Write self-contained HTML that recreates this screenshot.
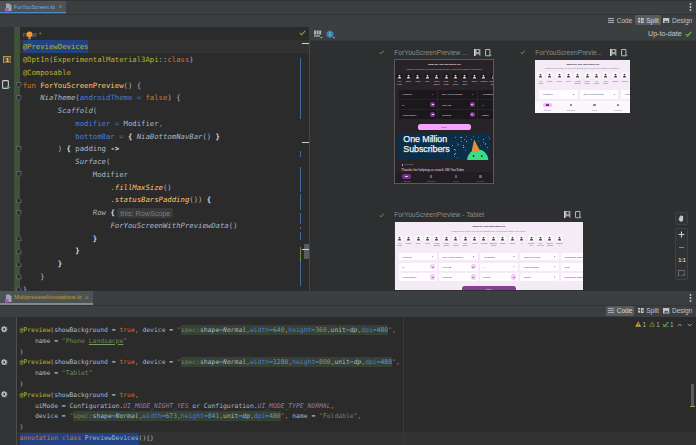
<!DOCTYPE html>
<html><head><meta charset="utf-8"><title>Compose Preview</title>
<style>
*{box-sizing:border-box;margin:0;padding:0}
html,body{width:696px;height:445px;overflow:hidden;background:#3c3f41}
body{position:relative;font-family:"Liberation Sans",sans-serif;color:#bbbbbb}
.abs{position:absolute}
.ui{font-family:"Liberation Sans",sans-serif;font-size:6.5px;line-height:9px;color:#c4c4c4;white-space:pre}
.code{position:absolute;font-family:"DejaVu Sans Mono","Liberation Mono",monospace;color:#a9b7c6}
.code div{white-space:pre}
#c1 div{height:12.75px;line-height:12.75px}
#c1{left:22.7px;top:28.6px;font-size:7.29px}
#c2{left:19.6px;top:324.9px;font-size:6.38px}
#c2 div{height:10.82px;line-height:10.82px}
.k{color:#cc7832}.a{color:#bbb529}.f{color:#ffc66d}.s{color:#6a8759}.n{color:#467cda}.i{font-style:italic}
.p{color:#9876aa;font-style:italic}.num{color:#6897bb}.w{color:#d5dde6;font-weight:bold}
.sel{background:#214283;display:inline-block;vertical-align:top}
#c1 .sel{height:12.75px}
#c2 .sel{height:12.8px}
.inj{background:#364135;padding:1px 0}
.hint{font-family:"Liberation Sans",sans-serif;font-size:7.2px;color:#7e7e7e;background:#3a3a3a;border-radius:2px;padding:0.5px 3px;margin-left:-1.8px}
.lbl{position:absolute;font-family:"Liberation Sans",sans-serif;font-size:6.68px;line-height:9px;color:#8c8c8c;white-space:pre}
.t{position:absolute;white-space:pre;font-family:"Liberation Sans",sans-serif;line-height:1}
</style></head><body>

<!-- top tab row -->
<div class="abs" style="left:0px;top:0px;width:696px;height:1px;background:#323232;"></div>
<div class="abs" style="left:0px;top:1px;width:66px;height:12.5px;background:#4e5254;"></div>
<div class="abs" style="left:0px;top:11.6px;width:66px;height:1.9px;background:#4a88c7;"></div>
<div class="abs" style="left:0px;top:13.5px;width:696px;height:0.8px;background:#323232;"></div>
<div class="abs ui" style="left:13.8px;top:2.6px;font-size:5.53px;color:#7aa8e2">ForYouScreen.kt</div>
<div class="abs ui" style="left:58.6px;top:2.4px;font-size:6.5px;color:#8a8d8f">×</div>
<svg class="abs" style="left:5px;top:2.5px" width="7" height="9" viewBox="0 0 7 9"><path d="M1 0.5h3.5L6.5 2.5V8H1z" fill="#9aa7b0"/><rect x="0" y="5" width="3.5" height="3.5" fill="#b34fd0"/></svg>
<svg class="abs" style="left:688.5px;top:3px" width="3" height="8" viewBox="0 0 3 8"><circle cx="1.5" cy="1" r="0.9" fill="#c8c8c8"/><circle cx="1.5" cy="4" r="0.9" fill="#c8c8c8"/><circle cx="1.5" cy="7" r="0.9" fill="#c8c8c8"/></svg>
<!-- top toolbar -->
<div class="abs" style="left:634.8px;top:14.9px;width:25.9px;height:10.4px;background:#585b5d;border-radius:1.5px"></div>
<div class="abs ui" style="left:616.8px;top:15.8px;">Code</div>
<div class="abs ui" style="left:646.2px;top:15.8px;color:#d8d8d8">Split</div>
<div class="abs ui" style="left:672px;top:15.8px">Design</div>
<svg class="abs" style="left:608.3px;top:17.6px" width="6.2" height="5.2" viewBox="0 0 6.2 5.2"><g fill="#a4a8ab"><rect x="0" y="0" width="6.2" height="1.1"/><rect x="0" y="2" width="6.2" height="1.1"/><rect x="0" y="4" width="6.2" height="1.1"/></g></svg>
<svg class="abs" style="left:638px;top:17.5px" width="5.6" height="5.4" viewBox="0 0 5.6 5.4"><g fill="#c4c8cc"><rect x="0" y="0" width="2.2" height="1"/><rect x="0" y="1.5" width="2.2" height="1"/><rect x="0" y="3" width="2.2" height="1"/><rect x="0" y="4.4" width="2.2" height="1"/><rect x="3" y="0" width="2.6" height="5.4"/></g><rect x="3.8" y="1.8" width="1" height="1.8" fill="#5a5d5f"/></svg>
<svg class="abs" style="left:663.4px;top:17.5px" width="6.3" height="5.5" viewBox="0 0 6.3 5.5"><rect x="0" y="0" width="6.3" height="5.5" fill="#c0c4c8"/><path d="M0.9 4.5L2.5 2.4l1 1.1L4.5 2.7 5.5 4.5z" fill="#3c3f41"/></svg>
<!-- top editor -->
<div class="abs" style="left:0px;top:27px;width:308.8px;height:263.5px;background:#2b2b2b;"></div>
<div class="abs" style="left:0px;top:40.2px;width:308.8px;height:12.6px;background:#323232;"></div>
<div class="abs" style="left:22.8px;top:40.2px;width:65.7px;height:12.5px;background:#214283;"></div>
<div class="abs" style="left:0px;top:27px;width:14.2px;height:263.5px;background:#313335;"></div>
<div class="abs" style="left:14.2px;top:27px;width:5.8px;height:263.5px;background:#3e5139;"></div>
<div id="c1" class="code">
<div><span style="color:#787878;font-family:'Liberation Sans',sans-serif;font-size:7.6px">new *</span></div>
<div><span class="a">@PreviewDevices</span></div>
<div><span class="a">@OptIn</span>(<span class="a">ExperimentalMaterial3Api</span>::<span class="k">class</span>)</div>
<div><span class="a">@Composable</span></div>
<div><span class="k">fun </span><span class="f">ForYouScreenPreview</span>() {</div>
<div>    <span class="i">NiaTheme</span>(<span class="n">androidTheme = </span><span class="k">false</span>) {</div>
<div>        <span class="i">Scaffold</span>(</div>
<div>            <span class="n">modifier = </span>Modifier<span class="k">,</span></div>
<div>            <span class="n">bottomBar = </span><span class="w">{</span> <span class="i">NiaBottomNavBar</span>() <span class="w">}</span></div>
<div>        ) <span class="w">{</span> padding <span class="w">-&gt;</span></div>
<div>            <span class="i">Surface</span>(</div>
<div>                Modifier</div>
<div>                    .<span class="f i">fillMaxSize</span>()</div>
<div>                    .<span class="f i">statusBarsPadding</span>()) <span class="w">{</span></div>
<div>                <span class="i">Row</span> <span class="w">{</span> <span class="hint">this: RowScope</span></div>
<div>                    <span class="i">ForYouScreenWithPreviewData</span>()</div>
<div>                <span class="w">}</span></div>
<div>            <span class="w">}</span></div>
<div>        <span class="w">}</span></div>
<div>    }</div>
<div>}</div>
</div>
<svg class="abs" style="left:16.4px;top:82.20px" width="5.6" height="6.3" viewBox="0 0 5.6 6.3"><path d="M0.5 0.5H5.1V3.6L2.8 5.8 0.5 3.6z" fill="#2e3032" stroke="#63676a" stroke-width="0.9"/></svg>
<svg class="abs" style="left:16.4px;top:94.95px" width="5.6" height="6.3" viewBox="0 0 5.6 6.3"><path d="M0.5 0.5H5.1V3.6L2.8 5.8 0.5 3.6z" fill="#2e3032" stroke="#63676a" stroke-width="0.9"/></svg>
<svg class="abs" style="left:16.4px;top:145.95px" width="5.6" height="6.3" viewBox="0 0 5.6 6.3"><path d="M0.5 0.5H5.1V3.6L2.8 5.8 0.5 3.6z" fill="#2e3032" stroke="#63676a" stroke-width="0.9"/></svg>
<svg class="abs" style="left:16.4px;top:171.45px" width="5.6" height="6.3" viewBox="0 0 5.6 6.3"><path d="M0.5 0.5H5.1V3.6L2.8 5.8 0.5 3.6z" fill="#2e3032" stroke="#63676a" stroke-width="0.9"/></svg>
<svg class="abs" style="left:16.4px;top:196.95px" width="5.6" height="6.3" viewBox="0 0 5.6 6.3"><path d="M0.5 5.8H5.1V2.7L2.8 0.5 0.5 2.7z" fill="#2e3032" stroke="#63676a" stroke-width="0.9"/></svg>
<svg class="abs" style="left:16.4px;top:209.70px" width="5.6" height="6.3" viewBox="0 0 5.6 6.3"><path d="M0.5 0.5H5.1V3.6L2.8 5.8 0.5 3.6z" fill="#2e3032" stroke="#63676a" stroke-width="0.9"/></svg>
<svg class="abs" style="left:16.4px;top:235.20px" width="5.6" height="6.3" viewBox="0 0 5.6 6.3"><path d="M0.5 5.8H5.1V2.7L2.8 0.5 0.5 2.7z" fill="#2e3032" stroke="#63676a" stroke-width="0.9"/></svg>
<svg class="abs" style="left:16.4px;top:247.95px" width="5.6" height="6.3" viewBox="0 0 5.6 6.3"><path d="M0.5 5.8H5.1V2.7L2.8 0.5 0.5 2.7z" fill="#2e3032" stroke="#63676a" stroke-width="0.9"/></svg>
<svg class="abs" style="left:16.4px;top:260.70px" width="5.6" height="6.3" viewBox="0 0 5.6 6.3"><path d="M0.5 5.8H5.1V2.7L2.8 0.5 0.5 2.7z" fill="#2e3032" stroke="#63676a" stroke-width="0.9"/></svg>
<svg class="abs" style="left:16.4px;top:273.45px" width="5.6" height="6.3" viewBox="0 0 5.6 6.3"><path d="M0.5 5.8H5.1V2.7L2.8 0.5 0.5 2.7z" fill="#2e3032" stroke="#63676a" stroke-width="0.9"/></svg>
<svg class="abs" style="left:16.4px;top:286.20px" width="5.6" height="6.3" viewBox="0 0 5.6 6.3"><path d="M0.5 5.8H5.1V2.7L2.8 0.5 0.5 2.7z" fill="#2e3032" stroke="#63676a" stroke-width="0.9"/></svg>
<svg class="abs" style="left:2.8px;top:55.5px" width="8.5" height="7.5" viewBox="0 0 8.5 7.5"><rect x="0.4" y="0.4" width="7.7" height="6.7" fill="#5e5339" stroke="#c9a94a" stroke-width="0.8"/><text x="4.3" y="6" font-size="6" font-weight="bold" text-anchor="middle" fill="#e8dcae" font-family="Liberation Sans, sans-serif">1</text></svg>
<svg class="abs" style="left:2px;top:79.5px" width="9" height="9.5" viewBox="0 0 9 9.5"><rect x="0.6" y="0.6" width="5.8" height="7.8" rx="0.8" fill="#3a3d3f" stroke="#c3c7ca" stroke-width="1.1"/><rect x="1.8" y="2" width="3.4" height="4" fill="#2f3133"/><path d="M5.2 5.6L8.6 7.5 5.2 9.4z" fill="#57b560"/></svg>
<svg class="abs" style="left:26.2px;top:30.8px" width="7" height="9" viewBox="0 0 7 9"><circle cx="3.5" cy="3.3" r="2.9" fill="#f0993a"/><rect x="2.2" y="6.4" width="2.6" height="1.8" fill="#9a9a9a"/></svg>
<svg class="abs" style="left:299px;top:30.4px" width="7" height="6" viewBox="0 0 7 6"><path d="M0.8 2.8L2.6 4.8 6.2 0.8" fill="none" stroke="#86a83c" stroke-width="1.1"/></svg>
<div class="abs" style="left:302px;top:42.6px;width:6.8px;height:1.3px;background:#cfcfcf;"></div>
<div class="abs" style="left:302px;top:141.7px;width:6.8px;height:1.3px;background:#cfcfcf;"></div>
<div class="abs" style="left:300.2px;top:58px;width:0.9px;height:61px;background:#41699c;"></div>
<div class="abs" style="left:300.2px;top:150.5px;width:0.9px;height:6px;background:#41699c;"></div>
<div class="abs" style="left:300.2px;top:167px;width:0.9px;height:24.5px;background:#41699c;"></div>
<div class="abs" style="left:300.2px;top:194px;width:0.9px;height:16px;background:#41699c;"></div>
<div class="abs" style="left:300.2px;top:213px;width:0.9px;height:11px;background:#41699c;"></div>
<div class="abs" style="left:300.2px;top:227px;width:0.9px;height:2px;background:#41699c;"></div>
<div class="abs" style="left:300.2px;top:232px;width:0.9px;height:8px;background:#41699c;"></div>
<div class="abs" style="left:300.2px;top:262px;width:0.9px;height:24px;background:#41699c;"></div>
<div class="abs" style="left:299.6px;top:247px;width:1.4px;height:15px;background:#6f8a4c;"></div>
<div class="abs" style="left:304px;top:244px;width:4.5px;height:15px;background:#5a5d5f;border-radius:1px"></div>
<div class="abs" style="left:302px;top:248.6px;width:6.8px;height:1.1px;background:#d8d8b0;"></div>
<!-- preview panel -->
<div class="abs" style="left:308.8px;top:27px;width:1.3px;height:263.5px;background:#434648;"></div>
<div class="abs" style="left:308.8px;top:27px;width:387.2px;height:13.6px;background:#3c3f41;"></div>
<div class="abs" style="left:310.1px;top:40.8px;width:385.9px;height:250px;background:#2d2f30;"></div>
<div class="abs" style="left:310.1px;top:40.4px;width:385.9px;height:0.8px;background:#343637;"></div>
<div class="abs ui" style="left:648px;top:29.6px;font-size:7.13px;color:#c8c8c8">Up-to-date</div>
<svg class="abs" style="left:684.5px;top:30.5px" width="7" height="6" viewBox="0 0 7 6"><path d="M0.8 3.2L2.6 5 6.2 0.8" fill="none" stroke="#62b543" stroke-width="1.2"/></svg>
<svg class="abs" style="left:313.5px;top:30px" width="9" height="9" viewBox="0 0 9 9"><g fill="#aeb2b5"><rect x="0" y="0.5" width="2" height="4"/><rect x="2.6" y="0.5" width="2" height="4"/><rect x="5.2" y="0.5" width="2" height="4"/><rect x="0" y="5.4" width="6" height="1.2"/></g><path d="M6 7h2.6L7.3 8.6z" fill="#aeb2b5"/></svg>
<svg class="abs" style="left:325.5px;top:29.5px" width="10" height="10" viewBox="0 0 10 10"><path d="M4 0.3L7.4 2.2V6.2L4 8.1 0.6 6.2V2.2z" fill="#3d7ec2"/><circle cx="4" cy="2.6" r="0.7" fill="#6fd06a"/><circle cx="4" cy="4.2" r="0.7" fill="#6fd06a"/><circle cx="4" cy="5.8" r="0.7" fill="#6fd06a"/><path d="M6.6 7h2.6L7.9 8.6z" fill="#aeb2b5"/></svg>
<!-- preview 1 -->
<svg class="abs" style="left:379.3px;top:50.4px" width="5.6" height="4.6" viewBox="0 0 7 6"><path d="M0.8 3.2L2.6 5 6.2 0.8" fill="none" stroke="#55a848" stroke-width="1.3"/></svg>
<div class="lbl" style="left:394.3px;top:48px">ForYouScreenPreview ...</div>
<svg class="abs" style="left:474px;top:48.8px" width="6.9" height="7.3" viewBox="0 0 7.5 8"><rect x="0" y="0" width="7" height="7.6" fill="#9ea2a5"/><circle cx="3.9" cy="2.3" r="1.3" fill="#2d2f30"/><path d="M1.6 7.6C1.6 5 6.2 5 6.2 7.6z" fill="#2d2f30"/><rect x="0" y="0" width="1.4" height="7.6" fill="#d8d8d8"/></svg>
<svg class="abs" style="left:484.8px;top:48.9px" width="7" height="7.9" viewBox="0 0 8 9"><rect x="0.6" y="0.6" width="5" height="7" rx="0.7" fill="#2d2f30" stroke="#b4b8bb" stroke-width="1.15"/><path d="M4.6 5.2L7.8 7 4.6 8.8z" fill="#57b560"/></svg>
<div class="abs" style="left:394px;top:59.3px;width:100px;height:125px;background:#272327;border:0.7px solid #5c5a5c;overflow:hidden">
<div class="t" style="left:-10.699999999999989px;width:120px;text-align:center;top:3.700000000000003px;font-size:2.5px;color:#f3e6f5;font-weight:bold">What are you interested in?</div>
<div class="t" style="left:-10.699999999999989px;width:120px;text-align:center;top:7.5px;font-size:2.1px;color:#d9a8e6;">Updates from topics you follow will appear here. Follow some things to get started.</div>
<svg class="abs" style="left:0.60px;top:12.50px" width="7" height="7" viewBox="-3.5 -3.5 7 7"><circle r="3.1" fill="#181518"/><circle cx="0" cy="-0.9" r="0.95" fill="#ddd4e0"/><path d="M-1.7 1.9C-1.7 -0.2 1.7 -0.2 1.7 1.9z" fill="#ddd4e0"/></svg>
<div class="t" style="left:-55.89999999999998px;width:120px;text-align:center;top:20.0px;font-size:2.0px;color:#e8c8f0;">Ana</div>
<div class="t" style="left:-55.89999999999998px;width:120px;text-align:center;top:22.299999999999997px;font-size:2.0px;color:#e8c8f0;">Horak</div>
<svg class="abs" style="left:10.00px;top:12.50px" width="7" height="7" viewBox="-3.5 -3.5 7 7"><circle r="3.1" fill="#181518"/><circle cx="0" cy="-0.9" r="0.95" fill="#ddd4e0"/><path d="M-1.7 1.9C-1.7 -0.2 1.7 -0.2 1.7 1.9z" fill="#ddd4e0"/></svg>
<div class="t" style="left:-46.5px;width:120px;text-align:center;top:20.0px;font-size:2.0px;color:#e8c8f0;">Blank</div>
<svg class="abs" style="left:19.40px;top:12.50px" width="7" height="7" viewBox="-3.5 -3.5 7 7"><circle r="3.1" fill="#181518"/><circle cx="0" cy="-0.9" r="0.95" fill="#ddd4e0"/><path d="M-1.7 1.9C-1.7 -0.2 1.7 -0.2 1.7 1.9z" fill="#ddd4e0"/></svg>
<div class="t" style="left:-37.099999999999966px;width:120px;text-align:center;top:20.0px;font-size:2.0px;color:#e8c8f0;">Milan</div>
<svg class="abs" style="left:28.80px;top:12.50px" width="7" height="7" viewBox="-3.5 -3.5 7 7"><circle r="3.1" fill="#181518"/><circle cx="0" cy="-0.9" r="0.95" fill="#ddd4e0"/><path d="M-1.7 1.9C-1.7 -0.2 1.7 -0.2 1.7 1.9z" fill="#ddd4e0"/></svg>
<div class="t" style="left:-27.69999999999999px;width:120px;text-align:center;top:20.0px;font-size:2.0px;color:#e8c8f0;">Rizvi</div>
<svg class="abs" style="left:38.20px;top:12.50px" width="7" height="7" viewBox="-3.5 -3.5 7 7"><circle r="3.1" fill="#181518"/><circle cx="0" cy="-0.9" r="0.95" fill="#ddd4e0"/><path d="M-1.7 1.9C-1.7 -0.2 1.7 -0.2 1.7 1.9z" fill="#ddd4e0"/></svg>
<div class="t" style="left:-18.299999999999955px;width:120px;text-align:center;top:20.0px;font-size:2.0px;color:#e8c8f0;">Singh</div>
<div class="t" style="left:-18.299999999999955px;width:120px;text-align:center;top:22.299999999999997px;font-size:2.0px;color:#e8c8f0;">Bowen</div>
<svg class="abs" style="left:47.60px;top:12.50px" width="7" height="7" viewBox="-3.5 -3.5 7 7"><circle r="3.1" fill="#181518"/><circle cx="0" cy="-0.9" r="0.95" fill="#ddd4e0"/><path d="M-1.7 1.9C-1.7 -0.2 1.7 -0.2 1.7 1.9z" fill="#ddd4e0"/></svg>
<div class="t" style="left:-8.899999999999977px;width:120px;text-align:center;top:20.0px;font-size:2.0px;color:#e8c8f0;">Marty</div>
<div class="t" style="left:-8.899999999999977px;width:120px;text-align:center;top:22.299999999999997px;font-size:2.0px;color:#e8c8f0;">Smith</div>
<svg class="abs" style="left:57.00px;top:12.50px" width="7" height="7" viewBox="-3.5 -3.5 7 7"><circle r="3.1" fill="#181518"/><circle cx="0" cy="-0.9" r="0.95" fill="#ddd4e0"/><path d="M-1.7 1.9C-1.7 -0.2 1.7 -0.2 1.7 1.9z" fill="#ddd4e0"/></svg>
<div class="t" style="left:0.5000000000000568px;width:120px;text-align:center;top:20.0px;font-size:2.0px;color:#e8c8f0;">Liu</div>
<div class="t" style="left:0.5000000000000568px;width:120px;text-align:center;top:22.299999999999997px;font-size:2.0px;color:#e8c8f0;">Ivanov</div>
<svg class="abs" style="left:66.40px;top:12.50px" width="7" height="7" viewBox="-3.5 -3.5 7 7"><circle r="3.1" fill="#181518"/><circle cx="0" cy="-0.9" r="0.95" fill="#ddd4e0"/><path d="M-1.7 1.9C-1.7 -0.2 1.7 -0.2 1.7 1.9z" fill="#ddd4e0"/></svg>
<div class="t" style="left:9.900000000000034px;width:120px;text-align:center;top:20.0px;font-size:2.0px;color:#e8c8f0;">Jeffy</div>
<div class="t" style="left:9.900000000000034px;width:120px;text-align:center;top:22.299999999999997px;font-size:2.0px;color:#e8c8f0;">Brink</div>
<svg class="abs" style="left:75.80px;top:12.50px" width="7" height="7" viewBox="-3.5 -3.5 7 7"><circle r="3.1" fill="#181518"/><circle cx="0" cy="-0.9" r="0.95" fill="#ddd4e0"/><path d="M-1.7 1.9C-1.7 -0.2 1.7 -0.2 1.7 1.9z" fill="#ddd4e0"/></svg>
<div class="t" style="left:19.30000000000001px;width:120px;text-align:center;top:20.0px;font-size:2.0px;color:#e8c8f0;">Sofica</div>
<svg class="abs" style="left:85.20px;top:12.50px" width="7" height="7" viewBox="-3.5 -3.5 7 7"><circle r="3.1" fill="#181518"/><circle cx="0" cy="-0.9" r="0.95" fill="#ddd4e0"/><path d="M-1.7 1.9C-1.7 -0.2 1.7 -0.2 1.7 1.9z" fill="#ddd4e0"/></svg>
<div class="t" style="left:28.700000000000045px;width:120px;text-align:center;top:20.0px;font-size:2.0px;color:#e8c8f0;">Ludmila</div>
<svg class="abs" style="left:94.60px;top:12.50px" width="7" height="7" viewBox="-3.5 -3.5 7 7"><circle r="3.1" fill="#181518"/><circle cx="0" cy="-0.9" r="0.95" fill="#ddd4e0"/><path d="M-1.7 1.9C-1.7 -0.2 1.7 -0.2 1.7 1.9z" fill="#ddd4e0"/></svg>
<div class="t" style="left:38.10000000000002px;width:120px;text-align:center;top:20.0px;font-size:2.0px;color:#e8c8f0;">Stephen</div>
<div class="t" style="left:38.10000000000002px;width:120px;text-align:center;top:22.299999999999997px;font-size:2.0px;color:#e8c8f0;">Jones</div>
<div class="abs" style="left:3.5px;top:30.0px;width:38.6px;height:8.7px;background:#1b181b;border-radius:1px"></div>
<div class="t" style="left:7.0px;top:33.2px;font-size:2.2px;color:#efe4f2;">Headlines</div>
<div class="abs" style="left:37.1px;top:33.8px;width:1.4px;height:1.1px;background:#a95bbb;clip-path:polygon(0 0,100% 0,50% 100%)"></div>
<div class="abs" style="left:43.4px;top:30.0px;width:38.6px;height:8.7px;background:#1b181b;border-radius:1px"></div>
<div class="t" style="left:46.89999999999998px;top:33.2px;font-size:2.2px;color:#efe4f2;">New APIs & Libraries</div>
<div class="abs" style="left:77.0px;top:33.8px;width:1.4px;height:1.1px;background:#a95bbb;clip-path:polygon(0 0,100% 0,50% 100%)"></div>
<div class="abs" style="left:83.3px;top:30.0px;width:38.6px;height:8.7px;background:#1b181b;border-radius:1px"></div>
<div class="t" style="left:86.80000000000001px;top:33.2px;font-size:2.2px;color:#efe4f2;">Accessibility</div>
<div class="abs" style="left:116.9px;top:33.8px;width:1.4px;height:1.1px;background:#a95bbb;clip-path:polygon(0 0,100% 0,50% 100%)"></div>
<div class="abs" style="left:3.5px;top:40.05px;width:38.6px;height:8.7px;background:#1b181b;border-radius:1px"></div>
<div class="t" style="left:7.0px;top:43.25px;font-size:2.2px;color:#efe4f2;">UI</div>
<div class="abs" style="left:34.8px;top:41.65px;width:5.5px;height:5.5px;background:#86359a;border-radius:50%"></div>
<div class="abs" style="left:36.5px;top:44.15px;width:2.1px;height:0.6px;background:#e9c8f0;"></div>
<div class="abs" style="left:43.4px;top:40.05px;width:38.6px;height:8.7px;background:#1b181b;border-radius:1px"></div>
<div class="t" style="left:46.89999999999998px;top:43.25px;font-size:2.2px;color:#efe4f2;">Wear OS</div>
<div class="abs" style="left:74.7px;top:41.65px;width:5.5px;height:5.5px;background:#86359a;border-radius:50%"></div>
<div class="abs" style="left:76.4px;top:44.15px;width:2.1px;height:0.6px;background:#e9c8f0;"></div>
<div class="abs" style="left:83.3px;top:40.05px;width:38.6px;height:8.7px;background:#1b181b;border-radius:1px"></div>
<div class="t" style="left:86.80000000000001px;top:43.25px;font-size:2.2px;color:#efe4f2;">AI</div>
<div class="abs" style="left:114.6px;top:41.65px;width:5.5px;height:5.5px;background:#86359a;border-radius:50%"></div>
<div class="abs" style="left:116.3px;top:44.15px;width:2.1px;height:0.6px;background:#e9c8f0;"></div>
<div class="abs" style="left:3.5px;top:50.1px;width:38.6px;height:8.7px;background:#1b181b;border-radius:1px"></div>
<div class="t" style="left:7.0px;top:53.3px;font-size:2.2px;color:#efe4f2;">Android Studio</div>
<div class="abs" style="left:34.8px;top:51.7px;width:5.5px;height:5.5px;background:#86359a;border-radius:50%"></div>
<div class="abs" style="left:36.5px;top:54.2px;width:2.1px;height:0.6px;background:#e9c8f0;"></div>
<div class="abs" style="left:43.4px;top:50.1px;width:38.6px;height:8.7px;background:#1b181b;border-radius:1px"></div>
<div class="t" style="left:46.89999999999998px;top:53.3px;font-size:2.2px;color:#efe4f2;">Compose</div>
<div class="abs" style="left:74.7px;top:51.7px;width:5.5px;height:5.5px;background:#86359a;border-radius:50%"></div>
<div class="abs" style="left:76.4px;top:54.2px;width:2.1px;height:0.6px;background:#e9c8f0;"></div>
<div class="abs" style="left:83.3px;top:50.1px;width:38.6px;height:8.7px;background:#1b181b;border-radius:1px"></div>
<div class="t" style="left:86.80000000000001px;top:53.3px;font-size:2.2px;color:#efe4f2;">Testing</div>
<div class="abs" style="left:114.6px;top:51.7px;width:5.5px;height:5.5px;background:#86359a;border-radius:50%"></div>
<div class="abs" style="left:116.3px;top:54.2px;width:2.1px;height:0.6px;background:#e9c8f0;"></div>
<div class="abs" style="left:22.5px;top:64.2px;width:53.3px;height:5.2px;background:#f5a3ff;border-radius:2.6px"></div>
<div class="t" style="left:-10.699999999999989px;width:120px;text-align:center;top:65.8px;font-size:2.2px;color:#5a2a66;">Done</div>
<div class="abs" style="left:2.9px;top:73.9px;width:91.7px;height:26.2px;background:#0c2f47;border-radius:1px"></div>
<div class="abs" style="left:69.28px;top:78.35px;width:0.7px;height:0.7px;background:#6f80b8;"></div>
<div class="abs" style="left:59.09px;top:95.44px;width:0.7px;height:0.7px;background:#3f68b0;"></div>
<div class="abs" style="left:70.83px;top:75.98px;width:0.7px;height:0.7px;background:#9a4a5a;"></div>
<div class="abs" style="left:65.24px;top:76.69px;width:0.7px;height:0.7px;background:#4a90b8;"></div>
<div class="abs" style="left:59.88px;top:76.81px;width:0.7px;height:0.7px;background:#4a90b8;"></div>
<div class="abs" style="left:59.49px;top:88.92px;width:0.7px;height:0.7px;background:#aab0c8;"></div>
<div class="abs" style="left:59.59px;top:89.43px;width:0.7px;height:0.7px;background:#3f68b0;"></div>
<div class="abs" style="left:93.42px;top:75.69px;width:0.7px;height:0.7px;background:#35598f;"></div>
<div class="abs" style="left:62.23px;top:85.19px;width:0.7px;height:0.7px;background:#9a4a5a;"></div>
<div class="abs" style="left:61.66px;top:82.37px;width:0.7px;height:0.7px;background:#35598f;"></div>
<div class="abs" style="left:82.53px;top:77.13px;width:0.7px;height:0.7px;background:#9a4a5a;"></div>
<div class="abs" style="left:77.57px;top:76.1px;width:0.7px;height:0.7px;background:#3f68b0;"></div>
<div class="abs" style="left:70.68px;top:80.83px;width:0.7px;height:0.7px;background:#aab0c8;"></div>
<div class="abs" style="left:83.16px;top:80.72px;width:0.7px;height:0.7px;background:#9a4a5a;"></div>
<div class="abs" style="left:68.41px;top:87.13px;width:0.7px;height:0.7px;background:#c89a3e;"></div>
<div class="abs" style="left:93.57px;top:77.51px;width:0.7px;height:0.7px;background:#4a90b8;"></div>
<div class="abs" style="left:63.4px;top:83.22px;width:0.7px;height:0.7px;background:#4a90b8;"></div>
<div class="abs" style="left:60.17px;top:88.73px;width:0.7px;height:0.7px;background:#35598f;"></div>
<div class="abs" style="left:89.69px;top:82.5px;width:0.7px;height:0.7px;background:#6f80b8;"></div>
<div class="abs" style="left:70.26px;top:87.17px;width:0.7px;height:0.7px;background:#35598f;"></div>
<div class="abs" style="left:92.25px;top:86.59px;width:0.7px;height:0.7px;background:#6f80b8;"></div>
<div class="abs" style="left:59.7px;top:93.14px;width:0.7px;height:0.7px;background:#c89a3e;"></div>
<div class="abs" style="left:87.71px;top:81.76px;width:0.7px;height:0.7px;background:#4a90b8;"></div>
<div class="abs" style="left:90.12px;top:83.35px;width:0.7px;height:0.7px;background:#4a90b8;"></div>
<div class="abs" style="left:70.45px;top:90.08px;width:0.7px;height:0.7px;background:#4a90b8;"></div>
<div class="abs" style="left:59.48px;top:94.09px;width:0.7px;height:0.7px;background:#aab0c8;"></div>
<div class="abs" style="left:84.62px;top:84.65px;width:0.7px;height:0.7px;background:#35598f;"></div>
<div class="abs" style="left:75.67px;top:78.74px;width:0.7px;height:0.7px;background:#4a90b8;"></div>
<div class="abs" style="left:67.6px;top:85.09px;width:0.7px;height:0.7px;background:#c89a3e;"></div>
<div class="abs" style="left:65.84px;top:76.62px;width:0.7px;height:0.7px;background:#aab0c8;"></div>
<div class="abs" style="left:65.88px;top:80.45px;width:0.7px;height:0.7px;background:#4a90b8;"></div>
<div class="abs" style="left:88.05px;top:79.15px;width:0.7px;height:0.7px;background:#c89a3e;"></div>
<div class="abs" style="left:57.45px;top:85.18px;width:0.7px;height:0.7px;background:#c89a3e;"></div>
<div class="abs" style="left:61.94px;top:96.41px;width:0.7px;height:0.7px;background:#9a4a5a;"></div>
<svg class="abs" style="left:71.90px;top:79.00px" width="22" height="21.2" viewBox="0 0 22 21.2"><path d="M0 21.2A10.7 10.7 0 0 1 21.4 21.2z" fill="#3ddc84"/><path d="M7.1 0.5L4.6 12.4Q8.8 13.4 12.8 11.2z" fill="#e98b3c"/><circle cx="6.6" cy="17" r="0.9" fill="#0c2f47"/><circle cx="14.8" cy="17" r="0.9" fill="#0c2f47"/></svg>
<div class="t" style="left:8.300000000000011px;top:74.6px;font-size:8.9px;color:#f4f4f4;letter-spacing:-0.05px;-webkit-text-stroke:0.25px #f4f4f4">One Million</div>
<div class="t" style="left:8.300000000000011px;top:84.4px;font-size:8.9px;color:#f4f4f4;letter-spacing:-0.05px;-webkit-text-stroke:0.25px #f4f4f4">Subscribers</div>
<div class="abs" style="left:6.7px;top:103.6px;width:1.8px;height:1.8px;background:#cfc0d4;border-radius:50%"></div>
<div class="t" style="left:10.100000000000023px;top:103.69999999999999px;font-size:1.5px;color:#cdbcd2;">Jan 1, 2021</div>
<div class="t" style="left:6.300000000000011px;top:108.5px;font-size:3.45px;color:#ecd9f2;">Thanks for helping us reach 1M YouTube</div>
<div class="abs" style="left:-0.7px;top:112.2px;width:100px;height:12.5px;background:#211d21;"></div>
<div class="abs" style="left:7.3px;top:114.1px;width:9.2px;height:4.5px;background:#7b2f8d;border-radius:2.25px"></div>
<div class="abs" style="left:10.3px;top:115.6px;width:3.2px;height:1.4px;background:#f0d8f5;border-radius:0.5px"></div>
<div class="t" style="left:-48.099999999999966px;width:120px;text-align:center;top:120.19999999999999px;font-size:2.0px;color:#c9a6d2;">For you</div>
<div class="abs" style="left:34.7px;top:115.2px;width:2.8px;height:2.8px;background:#6e6470;border-radius:0.6px"></div>
<div class="t" style="left:-23.899999999999977px;width:120px;text-align:center;top:120.19999999999999px;font-size:2.0px;color:#8f8492;">Episodes</div>
<div class="abs" style="left:59.5px;top:115.2px;width:2.8px;height:2.8px;background:#6e6470;border-radius:0.6px"></div>
<div class="t" style="left:0.9000000000000341px;width:120px;text-align:center;top:120.19999999999999px;font-size:2.0px;color:#8f8492;">Saved</div>
<div class="abs" style="left:83.9px;top:115.2px;width:2.8px;height:2.8px;background:#6e6470;border-radius:0.6px"></div>
<div class="t" style="left:25.30000000000001px;width:120px;text-align:center;top:120.19999999999999px;font-size:2.0px;color:#8f8492;">Interests</div>
</div>
<!-- preview 2 -->
<svg class="abs" style="left:520.3px;top:50.4px" width="5.6" height="4.6" viewBox="0 0 7 6"><path d="M0.8 3.2L2.6 5 6.2 0.8" fill="none" stroke="#55a848" stroke-width="1.3"/></svg>
<div class="lbl" style="left:535.3px;top:48px">ForYouScreenPrevie...</div>
<svg class="abs" style="left:610px;top:48.8px" width="6.9" height="7.3" viewBox="0 0 7.5 8"><rect x="0" y="0" width="7" height="7.6" fill="#9ea2a5"/><circle cx="3.9" cy="2.3" r="1.3" fill="#2d2f30"/><path d="M1.6 7.6C1.6 5 6.2 5 6.2 7.6z" fill="#2d2f30"/><rect x="0" y="0" width="1.4" height="7.6" fill="#d8d8d8"/></svg>
<svg class="abs" style="left:620.8px;top:48.9px" width="7" height="7.9" viewBox="0 0 8 9"><rect x="0.6" y="0.6" width="5" height="7" rx="0.7" fill="#2d2f30" stroke="#b4b8bb" stroke-width="1.15"/><path d="M4.6 5.2L7.8 7 4.6 8.8z" fill="#57b560"/></svg>
<div class="abs" style="left:535px;top:59.5px;width:95.2px;height:53.8px;background:#f4ebf6;overflow:hidden">
<div class="t" style="left:-12.200000000000045px;width:120px;text-align:center;top:4.100000000000001px;font-size:2.5px;color:#2a222c;font-weight:bold">What are you interested in?</div>
<div class="t" style="left:-12.600000000000023px;width:120px;text-align:center;top:7.900000000000006px;font-size:2.05px;color:#7c727f;">Updates from topics you follow will appear here. Follow some things to get started.</div>
<svg class="abs" style="left:1.90px;top:12.80px" width="7" height="7" viewBox="-3.5 -3.5 7 7"><circle r="3.3" fill="#ffffff"/><circle cx="0" cy="-0.9" r="0.95" fill="#4a444c"/><path d="M-1.7 1.9C-1.7 -0.2 1.7 -0.2 1.7 1.9z" fill="#4a444c"/></svg>
<div class="t" style="left:-54.60000000000002px;width:120px;text-align:center;top:20.5px;font-size:2.0px;color:#5f5662;">Ana</div>
<div class="t" style="left:-54.60000000000002px;width:120px;text-align:center;top:22.799999999999997px;font-size:2.0px;color:#5f5662;">Horak</div>
<svg class="abs" style="left:11.25px;top:12.80px" width="7" height="7" viewBox="-3.5 -3.5 7 7"><circle r="3.3" fill="#ffffff"/><circle cx="0" cy="-0.9" r="0.95" fill="#4a444c"/><path d="M-1.7 1.9C-1.7 -0.2 1.7 -0.2 1.7 1.9z" fill="#4a444c"/></svg>
<div class="t" style="left:-45.25px;width:120px;text-align:center;top:20.5px;font-size:2.0px;color:#5f5662;">Blank</div>
<svg class="abs" style="left:20.60px;top:12.80px" width="7" height="7" viewBox="-3.5 -3.5 7 7"><circle r="3.3" fill="#ffffff"/><circle cx="0" cy="-0.9" r="0.95" fill="#4a444c"/><path d="M-1.7 1.9C-1.7 -0.2 1.7 -0.2 1.7 1.9z" fill="#4a444c"/></svg>
<div class="t" style="left:-35.89999999999998px;width:120px;text-align:center;top:20.5px;font-size:2.0px;color:#5f5662;">Milan</div>
<svg class="abs" style="left:29.95px;top:12.80px" width="7" height="7" viewBox="-3.5 -3.5 7 7"><circle r="3.3" fill="#ffffff"/><circle cx="0" cy="-0.9" r="0.95" fill="#4a444c"/><path d="M-1.7 1.9C-1.7 -0.2 1.7 -0.2 1.7 1.9z" fill="#4a444c"/></svg>
<div class="t" style="left:-26.550000000000068px;width:120px;text-align:center;top:20.5px;font-size:2.0px;color:#5f5662;">Rizvi</div>
<svg class="abs" style="left:39.30px;top:12.80px" width="7" height="7" viewBox="-3.5 -3.5 7 7"><circle r="3.3" fill="#ffffff"/><circle cx="0" cy="-0.9" r="0.95" fill="#4a444c"/><path d="M-1.7 1.9C-1.7 -0.2 1.7 -0.2 1.7 1.9z" fill="#4a444c"/></svg>
<div class="t" style="left:-17.200000000000045px;width:120px;text-align:center;top:20.5px;font-size:2.0px;color:#5f5662;">Singh</div>
<div class="t" style="left:-17.200000000000045px;width:120px;text-align:center;top:22.799999999999997px;font-size:2.0px;color:#5f5662;">Bowen</div>
<svg class="abs" style="left:48.65px;top:12.80px" width="7" height="7" viewBox="-3.5 -3.5 7 7"><circle r="3.3" fill="#ffffff"/><circle cx="0" cy="-0.9" r="0.95" fill="#4a444c"/><path d="M-1.7 1.9C-1.7 -0.2 1.7 -0.2 1.7 1.9z" fill="#4a444c"/></svg>
<div class="t" style="left:-7.850000000000023px;width:120px;text-align:center;top:20.5px;font-size:2.0px;color:#5f5662;">Marty</div>
<div class="t" style="left:-7.850000000000023px;width:120px;text-align:center;top:22.799999999999997px;font-size:2.0px;color:#5f5662;">Smith</div>
<svg class="abs" style="left:58.00px;top:12.80px" width="7" height="7" viewBox="-3.5 -3.5 7 7"><circle r="3.3" fill="#ffffff"/><circle cx="0" cy="-0.9" r="0.95" fill="#4a444c"/><path d="M-1.7 1.9C-1.7 -0.2 1.7 -0.2 1.7 1.9z" fill="#4a444c"/></svg>
<div class="t" style="left:1.5px;width:120px;text-align:center;top:20.5px;font-size:2.0px;color:#5f5662;">Liu</div>
<div class="t" style="left:1.5px;width:120px;text-align:center;top:22.799999999999997px;font-size:2.0px;color:#5f5662;">Ivanov</div>
<svg class="abs" style="left:67.35px;top:12.80px" width="7" height="7" viewBox="-3.5 -3.5 7 7"><circle r="3.3" fill="#ffffff"/><circle cx="0" cy="-0.9" r="0.95" fill="#4a444c"/><path d="M-1.7 1.9C-1.7 -0.2 1.7 -0.2 1.7 1.9z" fill="#4a444c"/></svg>
<div class="t" style="left:10.850000000000023px;width:120px;text-align:center;top:20.5px;font-size:2.0px;color:#5f5662;">Jeffy</div>
<div class="t" style="left:10.850000000000023px;width:120px;text-align:center;top:22.799999999999997px;font-size:2.0px;color:#5f5662;">Brink</div>
<svg class="abs" style="left:76.70px;top:12.80px" width="7" height="7" viewBox="-3.5 -3.5 7 7"><circle r="3.3" fill="#ffffff"/><circle cx="0" cy="-0.9" r="0.95" fill="#4a444c"/><path d="M-1.7 1.9C-1.7 -0.2 1.7 -0.2 1.7 1.9z" fill="#4a444c"/></svg>
<div class="t" style="left:20.199999999999932px;width:120px;text-align:center;top:20.5px;font-size:2.0px;color:#5f5662;">Sofica</div>
<svg class="abs" style="left:86.05px;top:12.80px" width="7" height="7" viewBox="-3.5 -3.5 7 7"><circle r="3.3" fill="#ffffff"/><circle cx="0" cy="-0.9" r="0.95" fill="#4a444c"/><path d="M-1.7 1.9C-1.7 -0.2 1.7 -0.2 1.7 1.9z" fill="#4a444c"/></svg>
<div class="t" style="left:29.549999999999955px;width:120px;text-align:center;top:20.5px;font-size:2.0px;color:#5f5662;">Ludmila</div>
<div class="abs" style="left:4.3px;top:30.9px;width:38.5px;height:8.3px;background:#fefcfe;border-radius:1px"></div>
<div class="t" style="left:7.7999999999999545px;top:33.900000000000006px;font-size:2.2px;color:#3a333c;">Headlines</div>
<div class="abs" style="left:37.9px;top:34.6px;width:1.4px;height:1.1px;background:#6a606c;clip-path:polygon(0 0,100% 0,50% 100%)"></div>
<div class="abs" style="left:44.9px;top:30.9px;width:38.5px;height:8.3px;background:#fefcfe;border-radius:1px"></div>
<div class="t" style="left:48.39999999999998px;top:33.900000000000006px;font-size:2.2px;color:#3a333c;">New APIs & Libraries</div>
<div class="abs" style="left:78.5px;top:34.6px;width:1.4px;height:1.1px;background:#6a606c;clip-path:polygon(0 0,100% 0,50% 100%)"></div>
<div class="abs" style="left:85.5px;top:30.9px;width:38.5px;height:8.3px;background:#fefcfe;border-radius:1px"></div>
<div class="t" style="left:89.0px;top:33.900000000000006px;font-size:2.2px;color:#3a333c;">Accessibility</div>
<div class="abs" style="left:119.1px;top:34.6px;width:1.4px;height:1.1px;background:#6a606c;clip-path:polygon(0 0,100% 0,50% 100%)"></div>
<div class="abs" style="left:0px;top:41.1px;width:96px;height:13px;background:#fbf7fc;"></div>
<div class="abs" style="left:7.8px;top:43.3px;width:9.2px;height:4.4px;background:#f3b6fb;border-radius:2.2px"></div>
<div class="abs" style="left:10.8px;top:44.7px;width:3.2px;height:1.5px;background:#6a2a7a;border-radius:0.5px"></div>
<div class="t" style="left:-47.60000000000002px;width:120px;text-align:center;top:49.7px;font-size:2.0px;color:#5a505c;">For you</div>
<div class="abs" style="left:34.5px;top:44.1px;width:2.8px;height:2.8px;background:#8d848f;border-radius:0.6px"></div>
<div class="t" style="left:-24.100000000000023px;width:120px;text-align:center;top:49.7px;font-size:2.0px;color:#8a808c;">Episodes</div>
<div class="abs" style="left:57.9px;top:44.1px;width:2.8px;height:2.8px;background:#8d848f;border-radius:0.6px"></div>
<div class="t" style="left:-0.7000000000000455px;width:120px;text-align:center;top:49.7px;font-size:2.0px;color:#8a808c;">Saved</div>
<div class="abs" style="left:81.6px;top:44.1px;width:2.8px;height:2.8px;background:#8d848f;border-radius:0.6px"></div>
<div class="t" style="left:23px;width:120px;text-align:center;top:49.7px;font-size:2.0px;color:#8a808c;">Interests</div>
</div>
<!-- preview 3 -->
<svg class="abs" style="left:379.3px;top:212.70000000000002px" width="5.6" height="4.6" viewBox="0 0 7 6"><path d="M0.8 3.2L2.6 5 6.2 0.8" fill="none" stroke="#55a848" stroke-width="1.3"/></svg>
<div class="lbl" style="left:394.3px;top:210.3px">ForYouScreenPreview - Tablet</div>
<svg class="abs" style="left:564px;top:211.10000000000002px" width="6.9" height="7.3" viewBox="0 0 7.5 8"><rect x="0" y="0" width="7" height="7.6" fill="#9ea2a5"/><circle cx="3.9" cy="2.3" r="1.3" fill="#2d2f30"/><path d="M1.6 7.6C1.6 5 6.2 5 6.2 7.6z" fill="#2d2f30"/><rect x="0" y="0" width="1.4" height="7.6" fill="#d8d8d8"/></svg>
<svg class="abs" style="left:574.8px;top:211.20000000000002px" width="7" height="7.9" viewBox="0 0 8 9"><rect x="0.6" y="0.6" width="5" height="7" rx="0.7" fill="#2d2f30" stroke="#b4b8bb" stroke-width="1.15"/><path d="M4.6 5.2L7.8 7 4.6 8.8z" fill="#57b560"/></svg>
<div class="abs" style="left:394px;top:221.7px;width:189.4px;height:68.8px;background:#f4ebf6;overflow:hidden;border-left:0.8px solid #3a383a">
<div class="t" style="left:33.89999999999998px;width:120px;text-align:center;top:4.300000000000011px;font-size:2.5px;color:#2a222c;font-weight:bold">What are you interested in?</div>
<div class="t" style="left:33.89999999999998px;width:120px;text-align:center;top:8.0px;font-size:2.05px;color:#7c727f;">Updates from topics you follow will appear here. Follow some things to get started.</div>
<svg class="abs" style="left:0.70px;top:13.10px" width="7" height="7" viewBox="-3.5 -3.5 7 7"><circle r="3.3" fill="#ffffff"/><circle cx="0" cy="-0.9" r="0.95" fill="#4a444c"/><path d="M-1.7 1.9C-1.7 -0.2 1.7 -0.2 1.7 1.9z" fill="#4a444c"/></svg>
<div class="t" style="left:-55.80000000000001px;width:120px;text-align:center;top:20.5px;font-size:2.0px;color:#5f5662;">Ana</div>
<div class="t" style="left:-55.80000000000001px;width:120px;text-align:center;top:22.80000000000001px;font-size:2.0px;color:#5f5662;">Horak</div>
<svg class="abs" style="left:10.12px;top:13.10px" width="7" height="7" viewBox="-3.5 -3.5 7 7"><circle r="3.3" fill="#ffffff"/><circle cx="0" cy="-0.9" r="0.95" fill="#4a444c"/><path d="M-1.7 1.9C-1.7 -0.2 1.7 -0.2 1.7 1.9z" fill="#4a444c"/></svg>
<div class="t" style="left:-46.379999999999995px;width:120px;text-align:center;top:20.5px;font-size:2.0px;color:#5f5662;">Blank</div>
<svg class="abs" style="left:19.54px;top:13.10px" width="7" height="7" viewBox="-3.5 -3.5 7 7"><circle r="3.3" fill="#ffffff"/><circle cx="0" cy="-0.9" r="0.95" fill="#4a444c"/><path d="M-1.7 1.9C-1.7 -0.2 1.7 -0.2 1.7 1.9z" fill="#4a444c"/></svg>
<div class="t" style="left:-36.960000000000036px;width:120px;text-align:center;top:20.5px;font-size:2.0px;color:#5f5662;">Milan</div>
<svg class="abs" style="left:28.96px;top:13.10px" width="7" height="7" viewBox="-3.5 -3.5 7 7"><circle r="3.3" fill="#ffffff"/><circle cx="0" cy="-0.9" r="0.95" fill="#4a444c"/><path d="M-1.7 1.9C-1.7 -0.2 1.7 -0.2 1.7 1.9z" fill="#4a444c"/></svg>
<div class="t" style="left:-27.54000000000002px;width:120px;text-align:center;top:20.5px;font-size:2.0px;color:#5f5662;">Rizvi</div>
<svg class="abs" style="left:38.38px;top:13.10px" width="7" height="7" viewBox="-3.5 -3.5 7 7"><circle r="3.3" fill="#ffffff"/><circle cx="0" cy="-0.9" r="0.95" fill="#4a444c"/><path d="M-1.7 1.9C-1.7 -0.2 1.7 -0.2 1.7 1.9z" fill="#4a444c"/></svg>
<div class="t" style="left:-18.120000000000005px;width:120px;text-align:center;top:20.5px;font-size:2.0px;color:#5f5662;">Singh</div>
<div class="t" style="left:-18.120000000000005px;width:120px;text-align:center;top:22.80000000000001px;font-size:2.0px;color:#5f5662;">Bowen</div>
<svg class="abs" style="left:47.80px;top:13.10px" width="7" height="7" viewBox="-3.5 -3.5 7 7"><circle r="3.3" fill="#ffffff"/><circle cx="0" cy="-0.9" r="0.95" fill="#4a444c"/><path d="M-1.7 1.9C-1.7 -0.2 1.7 -0.2 1.7 1.9z" fill="#4a444c"/></svg>
<div class="t" style="left:-8.699999999999989px;width:120px;text-align:center;top:20.5px;font-size:2.0px;color:#5f5662;">Marty</div>
<div class="t" style="left:-8.699999999999989px;width:120px;text-align:center;top:22.80000000000001px;font-size:2.0px;color:#5f5662;">Smith</div>
<svg class="abs" style="left:57.22px;top:13.10px" width="7" height="7" viewBox="-3.5 -3.5 7 7"><circle r="3.3" fill="#ffffff"/><circle cx="0" cy="-0.9" r="0.95" fill="#4a444c"/><path d="M-1.7 1.9C-1.7 -0.2 1.7 -0.2 1.7 1.9z" fill="#4a444c"/></svg>
<div class="t" style="left:0.7199999999999704px;width:120px;text-align:center;top:20.5px;font-size:2.0px;color:#5f5662;">Liu</div>
<div class="t" style="left:0.7199999999999704px;width:120px;text-align:center;top:22.80000000000001px;font-size:2.0px;color:#5f5662;">Ivanov</div>
<svg class="abs" style="left:66.64px;top:13.10px" width="7" height="7" viewBox="-3.5 -3.5 7 7"><circle r="3.3" fill="#ffffff"/><circle cx="0" cy="-0.9" r="0.95" fill="#4a444c"/><path d="M-1.7 1.9C-1.7 -0.2 1.7 -0.2 1.7 1.9z" fill="#4a444c"/></svg>
<div class="t" style="left:10.139999999999986px;width:120px;text-align:center;top:20.5px;font-size:2.0px;color:#5f5662;">Jeffy</div>
<div class="t" style="left:10.139999999999986px;width:120px;text-align:center;top:22.80000000000001px;font-size:2.0px;color:#5f5662;">Brink</div>
<svg class="abs" style="left:76.06px;top:13.10px" width="7" height="7" viewBox="-3.5 -3.5 7 7"><circle r="3.3" fill="#ffffff"/><circle cx="0" cy="-0.9" r="0.95" fill="#4a444c"/><path d="M-1.7 1.9C-1.7 -0.2 1.7 -0.2 1.7 1.9z" fill="#4a444c"/></svg>
<div class="t" style="left:19.560000000000002px;width:120px;text-align:center;top:20.5px;font-size:2.0px;color:#5f5662;">Sofica</div>
<svg class="abs" style="left:85.48px;top:13.10px" width="7" height="7" viewBox="-3.5 -3.5 7 7"><circle r="3.3" fill="#ffffff"/><circle cx="0" cy="-0.9" r="0.95" fill="#4a444c"/><path d="M-1.7 1.9C-1.7 -0.2 1.7 -0.2 1.7 1.9z" fill="#4a444c"/></svg>
<div class="t" style="left:28.97999999999996px;width:120px;text-align:center;top:20.5px;font-size:2.0px;color:#5f5662;">Ludmila</div>
<svg class="abs" style="left:94.90px;top:13.10px" width="7" height="7" viewBox="-3.5 -3.5 7 7"><circle r="3.3" fill="#ffffff"/><circle cx="0" cy="-0.9" r="0.95" fill="#4a444c"/><path d="M-1.7 1.9C-1.7 -0.2 1.7 -0.2 1.7 1.9z" fill="#4a444c"/></svg>
<div class="t" style="left:38.39999999999998px;width:120px;text-align:center;top:20.5px;font-size:2.0px;color:#5f5662;">Stephen</div>
<div class="t" style="left:38.39999999999998px;width:120px;text-align:center;top:22.80000000000001px;font-size:2.0px;color:#5f5662;">Jones</div>
<svg class="abs" style="left:104.32px;top:13.10px" width="7" height="7" viewBox="-3.5 -3.5 7 7"><circle r="3.3" fill="#ffffff"/><circle cx="0" cy="-0.9" r="0.95" fill="#4a444c"/><path d="M-1.7 1.9C-1.7 -0.2 1.7 -0.2 1.7 1.9z" fill="#4a444c"/></svg>
<div class="t" style="left:47.81999999999999px;width:120px;text-align:center;top:20.5px;font-size:2.0px;color:#5f5662;">Daniel</div>
<svg class="abs" style="left:113.74px;top:13.10px" width="7" height="7" viewBox="-3.5 -3.5 7 7"><circle r="3.3" fill="#ffffff"/><circle cx="0" cy="-0.9" r="0.95" fill="#4a444c"/><path d="M-1.7 1.9C-1.7 -0.2 1.7 -0.2 1.7 1.9z" fill="#4a444c"/></svg>
<div class="t" style="left:57.23999999999995px;width:120px;text-align:center;top:20.5px;font-size:2.0px;color:#5f5662;">Chad</div>
<svg class="abs" style="left:123.16px;top:13.10px" width="7" height="7" viewBox="-3.5 -3.5 7 7"><circle r="3.3" fill="#ffffff"/><circle cx="0" cy="-0.9" r="0.95" fill="#4a444c"/><path d="M-1.7 1.9C-1.7 -0.2 1.7 -0.2 1.7 1.9z" fill="#4a444c"/></svg>
<div class="t" style="left:66.66000000000003px;width:120px;text-align:center;top:20.5px;font-size:2.0px;color:#5f5662;">Yi</div>
<svg class="abs" style="left:132.58px;top:13.10px" width="7" height="7" viewBox="-3.5 -3.5 7 7"><circle r="3.3" fill="#ffffff"/><circle cx="0" cy="-0.9" r="0.95" fill="#4a444c"/><path d="M-1.7 1.9C-1.7 -0.2 1.7 -0.2 1.7 1.9z" fill="#4a444c"/></svg>
<div class="t" style="left:76.07999999999998px;width:120px;text-align:center;top:20.5px;font-size:2.0px;color:#5f5662;">Sophia</div>
<div class="t" style="left:76.07999999999998px;width:120px;text-align:center;top:22.80000000000001px;font-size:2.0px;color:#5f5662;">Lee</div>
<svg class="abs" style="left:142.00px;top:13.10px" width="7" height="7" viewBox="-3.5 -3.5 7 7"><circle r="3.3" fill="#ffffff"/><circle cx="0" cy="-0.9" r="0.95" fill="#4a444c"/><path d="M-1.7 1.9C-1.7 -0.2 1.7 -0.2 1.7 1.9z" fill="#4a444c"/></svg>
<div class="t" style="left:85.49999999999994px;width:120px;text-align:center;top:20.5px;font-size:2.0px;color:#5f5662;">Max</div>
<div class="t" style="left:85.49999999999994px;width:120px;text-align:center;top:22.80000000000001px;font-size:2.0px;color:#5f5662;">Meyers</div>
<svg class="abs" style="left:151.42px;top:13.10px" width="7" height="7" viewBox="-3.5 -3.5 7 7"><circle r="3.3" fill="#ffffff"/><circle cx="0" cy="-0.9" r="0.95" fill="#4a444c"/><path d="M-1.7 1.9C-1.7 -0.2 1.7 -0.2 1.7 1.9z" fill="#4a444c"/></svg>
<div class="t" style="left:94.92000000000002px;width:120px;text-align:center;top:20.5px;font-size:2.0px;color:#5f5662;">Rachel</div>
<div class="t" style="left:94.92000000000002px;width:120px;text-align:center;top:22.80000000000001px;font-size:2.0px;color:#5f5662;">Chang</div>
<svg class="abs" style="left:160.84px;top:13.10px" width="7" height="7" viewBox="-3.5 -3.5 7 7"><circle r="3.3" fill="#ffffff"/><circle cx="0" cy="-0.9" r="0.95" fill="#4a444c"/><path d="M-1.7 1.9C-1.7 -0.2 1.7 -0.2 1.7 1.9z" fill="#4a444c"/></svg>
<div class="t" style="left:104.33999999999997px;width:120px;text-align:center;top:20.5px;font-size:2.0px;color:#5f5662;">Chaitra</div>
<div class="t" style="left:104.33999999999997px;width:120px;text-align:center;top:22.80000000000001px;font-size:2.0px;color:#5f5662;">K</div>
<div class="abs" style="left:3.5px;top:31.3px;width:38.7px;height:7.5px;background:#fefcfe;border-radius:1px"></div>
<div class="t" style="left:7.0px;top:34.0px;font-size:2.2px;color:#3a333c;">Headlines</div>
<div class="abs" style="left:37.1px;top:34.6px;width:1.4px;height:1.1px;background:#5a505c;clip-path:polygon(0 0,100% 0,50% 100%)"></div>
<div class="abs" style="left:44.1px;top:31.3px;width:38.7px;height:7.5px;background:#fefcfe;border-radius:1px"></div>
<div class="t" style="left:47.60000000000002px;top:34.0px;font-size:2.2px;color:#3a333c;">New APIs & Libraries</div>
<div class="abs" style="left:77.7px;top:34.6px;width:1.4px;height:1.1px;background:#5a505c;clip-path:polygon(0 0,100% 0,50% 100%)"></div>
<div class="abs" style="left:84.7px;top:31.3px;width:38.7px;height:7.5px;background:#fefcfe;border-radius:1px"></div>
<div class="t" style="left:88.19999999999999px;top:34.0px;font-size:2.2px;color:#3a333c;">Accessibility</div>
<div class="abs" style="left:118.3px;top:34.6px;width:1.4px;height:1.1px;background:#5a505c;clip-path:polygon(0 0,100% 0,50% 100%)"></div>
<div class="abs" style="left:125.3px;top:31.3px;width:38.7px;height:7.5px;background:#fefcfe;border-radius:1px"></div>
<div class="t" style="left:128.8px;top:34.0px;font-size:2.2px;color:#3a333c;">Camera & Media</div>
<div class="abs" style="left:158.9px;top:34.6px;width:1.4px;height:1.1px;background:#5a505c;clip-path:polygon(0 0,100% 0,50% 100%)"></div>
<div class="abs" style="left:165.9px;top:31.3px;width:38.7px;height:7.5px;background:#fefcfe;border-radius:1px"></div>
<div class="t" style="left:169.40000000000003px;top:34.0px;font-size:2.2px;color:#3a333c;">Publishing & Distribution</div>
<div class="abs" style="left:3.5px;top:41.4px;width:38.7px;height:7.5px;background:#fefcfe;border-radius:1px"></div>
<div class="t" style="left:7.0px;top:44.10000000000002px;font-size:2.2px;color:#3a333c;">UI</div>
<div class="abs" style="left:35.0px;top:42.6px;width:5.2px;height:5.2px;background:#f6c9fb;border-radius:50%"></div>
<div class="abs" style="left:36.6px;top:44.9px;width:2px;height:0.6px;background:#c86ad8;"></div>
<div class="abs" style="left:44.1px;top:41.4px;width:38.7px;height:7.5px;background:#fefcfe;border-radius:1px"></div>
<div class="t" style="left:47.60000000000002px;top:44.10000000000002px;font-size:2.2px;color:#3a333c;">Wear OS</div>
<div class="abs" style="left:75.6px;top:42.6px;width:5.2px;height:5.2px;background:#f6c9fb;border-radius:50%"></div>
<div class="abs" style="left:77.2px;top:44.9px;width:2px;height:0.6px;background:#c86ad8;"></div>
<div class="abs" style="left:84.7px;top:41.4px;width:38.7px;height:7.5px;background:#fefcfe;border-radius:1px"></div>
<div class="t" style="left:88.19999999999999px;top:44.10000000000002px;font-size:2.2px;color:#3a333c;">AI</div>
<div class="abs" style="left:118.3px;top:44.7px;width:1.4px;height:1.1px;background:#5a505c;clip-path:polygon(0 0,100% 0,50% 100%)"></div>
<div class="abs" style="left:125.3px;top:41.4px;width:38.7px;height:7.5px;background:#fefcfe;border-radius:1px"></div>
<div class="t" style="left:128.8px;top:44.10000000000002px;font-size:2.2px;color:#3a333c;">Kotlin & Design</div>
<div class="abs" style="left:158.9px;top:44.7px;width:1.4px;height:1.1px;background:#5a505c;clip-path:polygon(0 0,100% 0,50% 100%)"></div>
<div class="abs" style="left:165.9px;top:41.4px;width:38.7px;height:7.5px;background:#fefcfe;border-radius:1px"></div>
<div class="t" style="left:169.40000000000003px;top:44.10000000000002px;font-size:2.2px;color:#3a333c;">Tools</div>
<div class="abs" style="left:3.5px;top:51.5px;width:38.7px;height:7.5px;background:#fefcfe;border-radius:1px"></div>
<div class="t" style="left:7.0px;top:54.19999999999999px;font-size:2.2px;color:#3a333c;">Android Studio</div>
<div class="abs" style="left:35.0px;top:52.7px;width:5.2px;height:5.2px;background:#f6c9fb;border-radius:50%"></div>
<div class="abs" style="left:36.6px;top:55.0px;width:2px;height:0.6px;background:#c86ad8;"></div>
<div class="abs" style="left:44.1px;top:51.5px;width:38.7px;height:7.5px;background:#fefcfe;border-radius:1px"></div>
<div class="t" style="left:47.60000000000002px;top:54.19999999999999px;font-size:2.2px;color:#3a333c;">Compose</div>
<div class="abs" style="left:75.6px;top:52.7px;width:5.2px;height:5.2px;background:#f6c9fb;border-radius:50%"></div>
<div class="abs" style="left:77.2px;top:55.0px;width:2px;height:0.6px;background:#c86ad8;"></div>
<div class="abs" style="left:84.7px;top:51.5px;width:38.7px;height:7.5px;background:#fefcfe;border-radius:1px"></div>
<div class="t" style="left:88.19999999999999px;top:54.19999999999999px;font-size:2.2px;color:#3a333c;">Testing</div>
<div class="abs" style="left:116.2px;top:52.7px;width:5.2px;height:5.2px;background:#f6c9fb;border-radius:50%"></div>
<div class="abs" style="left:117.8px;top:55.0px;width:2px;height:0.6px;background:#c86ad8;"></div>
<div class="abs" style="left:125.3px;top:51.5px;width:38.7px;height:7.5px;background:#fefcfe;border-radius:1px"></div>
<div class="t" style="left:128.8px;top:54.19999999999999px;font-size:2.2px;color:#3a333c;">Games</div>
<div class="abs" style="left:158.9px;top:54.8px;width:1.4px;height:1.1px;background:#5a505c;clip-path:polygon(0 0,100% 0,50% 100%)"></div>
<div class="abs" style="left:165.9px;top:51.5px;width:38.7px;height:7.5px;background:#fefcfe;border-radius:1px"></div>
<div class="t" style="left:169.40000000000003px;top:54.19999999999999px;font-size:2.2px;color:#3a333c;">Publishing & Distribution</div>
<div class="abs" style="left:67.4px;top:64.5px;width:53.3px;height:6px;background:#8a3c96;border-radius:2.6px"></div>
<div class="t" style="left:33.89999999999998px;width:120px;text-align:center;top:65.90000000000003px;font-size:2.2px;color:#f6e6fa;">Done</div>
</div>
<div class="abs" style="left:675px;top:212px;width:13px;height:12.8px;background:#303234;border:0.7px solid #3f4143;border-radius:1.5px"></div>
<div class="abs" style="left:675px;top:227.6px;width:13px;height:52.6px;background:#303234;border:0.7px solid #3f4143;border-radius:1.5px"></div>
<svg class="abs" style="left:678.2px;top:214.8px" width="6.8" height="7" viewBox="0 0 8 9"><path d="M1.4 4.2V2.2a.6.6 0 0 1 1.2 0V1.2a.6.6 0 0 1 1.2 0V.9a.6.6 0 0 1 1.2 0v.6a.6.6 0 0 1 1.2 0V5.8C6.2 7.6 5.4 8.6 3.8 8.6 2.4 8.6 1.8 7.8 1 6.4L.3 5.1c-.3-.6.5-1 .9-.5z" fill="#c8c8c8"/></svg>
<svg class="abs" style="left:678px;top:231px" width="7" height="7" viewBox="0 0 7 7"><path d="M3.5 0.6V6.4M0.6 3.5H6.4" stroke="#cdcdcd" stroke-width="1.1"/></svg>
<svg class="abs" style="left:678px;top:244.3px" width="7" height="7" viewBox="0 0 7 7"><path d="M1 3.5H6" stroke="#808284" stroke-width="1"/></svg>
<div class="abs ui" style="left:678.3px;top:255.9px;font-size:5.6px;font-weight:bold;color:#cfcfcf;letter-spacing:-0.3px">1:1</div>
<svg class="abs" style="left:678px;top:269.8px" width="7.4" height="6.6" viewBox="0 0 7.4 6.6"><rect x="0.5" y="0.5" width="6.4" height="5.6" fill="none" stroke="#6e7072" stroke-width="0.9"/><path d="M4.2 5H5.8V3.6" fill="none" stroke="#6e7072" stroke-width="0.7"/></svg>
<!-- bottom region -->
<div class="abs" style="left:0px;top:290.5px;width:696px;height:154.5px;background:#3c3f41;"></div>
<div class="abs" style="left:0px;top:290.5px;width:93px;height:12.3px;background:#4e5254;"></div>
<div class="abs" style="left:0px;top:302.6px;width:93px;height:2.2px;background:#878a8c;"></div>
<div class="abs" style="left:0px;top:304.6px;width:696px;height:0.7px;background:#323232;"></div>
<div class="abs ui" style="left:14.2px;top:293.4px;font-size:5.68px;color:#b3a12c">MultipreviewAnnotations.kt</div>
<div class="abs ui" style="left:85px;top:293.2px;font-size:6.5px;color:#8a8d8f">×</div>
<svg class="abs" style="left:5px;top:293.5px" width="7" height="9" viewBox="0 0 7 9"><path d="M1 0.5h3.5L6.5 2.5V8H1z" fill="#9aa7b0"/><rect x="0" y="5" width="3.5" height="3.5" fill="#b34fd0"/></svg>
<svg class="abs" style="left:688.5px;top:294.2px" width="3" height="8" viewBox="0 0 3 8"><circle cx="1.5" cy="1" r="0.9" fill="#c8c8c8"/><circle cx="1.5" cy="4" r="0.9" fill="#c8c8c8"/><circle cx="1.5" cy="7" r="0.9" fill="#c8c8c8"/></svg>
<div class="abs" style="left:605.6px;top:305.70000000000005px;width:28.8px;height:10.7px;background:#585b5d;border-radius:1.5px"></div>
<div class="abs ui" style="left:616.8px;top:306.40000000000003px;color:#d8d8d8">Code</div>
<div class="abs ui" style="left:646.2px;top:306.40000000000003px;">Split</div>
<div class="abs ui" style="left:672px;top:306.40000000000003px">Design</div>
<svg class="abs" style="left:608.3px;top:308.20000000000005px" width="6.2" height="5.2" viewBox="0 0 6.2 5.2"><g fill="#a4a8ab"><rect x="0" y="0" width="6.2" height="1.1"/><rect x="0" y="2" width="6.2" height="1.1"/><rect x="0" y="4" width="6.2" height="1.1"/></g></svg>
<svg class="abs" style="left:638px;top:308.1px" width="5.6" height="5.4" viewBox="0 0 5.6 5.4"><g fill="#c4c8cc"><rect x="0" y="0" width="2.2" height="1"/><rect x="0" y="1.5" width="2.2" height="1"/><rect x="0" y="3" width="2.2" height="1"/><rect x="0" y="4.4" width="2.2" height="1"/><rect x="3" y="0" width="2.6" height="5.4"/></g><rect x="3.8" y="1.8" width="1" height="1.8" fill="#3c3f41"/></svg>
<svg class="abs" style="left:663.4px;top:308.1px" width="6.3" height="5.5" viewBox="0 0 6.3 5.5"><rect x="0" y="0" width="6.3" height="5.5" fill="#c0c4c8"/><path d="M0.9 4.5L2.5 2.4l1 1.1L4.5 2.7 5.5 4.5z" fill="#3c3f41"/></svg>
<div class="abs" style="left:0px;top:317.3px;width:696px;height:127.7px;background:#2b2b2b;"></div>
<div class="abs" style="left:0px;top:431.8px;width:696px;height:13.2px;background:#323232;"></div>
<div class="abs" style="left:0px;top:317.3px;width:16.3px;height:127.7px;background:#313335;"></div>
<div class="abs" style="left:16.3px;top:317.3px;width:0.6px;height:127.7px;background:#4d4d4d;"></div>
<div class="abs" style="left:403.3px;top:317.3px;width:0.7px;height:127.7px;background:#3a3a3a;"></div>
<div id="c2" class="code">
<div><span class="a">@Preview</span>(showBackground = <span class="k">true, </span>device = <span class="s">"</span><span class="inj"><span class="s">spec:</span>shape<span class="n">=</span><span class="i">Normal</span><span class="k">,</span><span class="n">width=</span><span class="num">640</span><span class="k">,</span><span class="n">height=</span><span class="num">360</span><span class="k">,</span>unit<span class="n">=</span><span class="i">dp</span><span class="k">,</span><span class="n">dpi=</span><span class="num">480</span></span><span class="s">"</span><span class="k">,</span></div>
<div>    name = <span class="s">"Phone <span style="text-decoration:underline;text-decoration-color:#7a9a5a;text-decoration-thickness:0.6px;text-underline-offset:1px">Landsacpe</span>"</span></div>
<div>)</div>
<div><span class="a">@Preview</span>(showBackground = <span class="k">true, </span>device = <span class="s">"</span><span class="inj"><span class="s">spec:</span>shape<span class="n">=</span><span class="i">Normal</span><span class="k">,</span><span class="n">width=</span><span class="num">1280</span><span class="k">,</span><span class="n">height=</span><span class="num">800</span><span class="k">,</span>unit<span class="n">=</span><span class="i">dp</span><span class="k">,</span><span class="n">dpi=</span><span class="num">480</span></span><span class="s">"</span><span class="k">,</span></div>
<div>    name = <span class="s">"Tablet"</span></div>
<div>)</div>
<div><span class="a">@Preview</span>(showBackground = <span class="k">true,</span></div>
<div>    uiMode = Configuration.<span class="p">UI_MODE_NIGHT_YES</span> or Configuration.<span class="p">UI_MODE_TYPE_NORMAL</span><span class="k">,</span></div>
<div>    device = <span class="s">"</span><span class="inj"><span class="s">spec:</span>shape<span class="n">=</span><span class="i">Normal</span><span class="k">,</span><span class="n">width=</span><span class="num">673</span><span class="k">,</span><span class="n">height=</span><span class="num">841</span><span class="k">,</span>unit<span class="n">=</span><span class="i">dp</span><span class="k">,</span><span class="n">dpi=</span><span class="num">480</span></span><span class="s">"</span><span class="k">, </span>name = <span class="s">"Foldable"</span><span class="k">,</span></div>
<div>)</div>
<div><span class="sel"><span class="k">annotation class </span>PreviewDevices</span>(){}</div>
</div>
<svg class="abs" style="left:1.2px;top:326.40000000000003px" width="6.4" height="6.4" viewBox="-3.2 -3.2 6.4 6.4"><g fill="#b8bcbf"><rect x="-0.65" y="-3.2" width="1.3" height="6.4" transform="rotate(0)"/><rect x="-0.65" y="-3.2" width="1.3" height="6.4" transform="rotate(45)"/><rect x="-0.65" y="-3.2" width="1.3" height="6.4" transform="rotate(90)"/><rect x="-0.65" y="-3.2" width="1.3" height="6.4" transform="rotate(135)"/><circle r="2.2"/></g><circle r="1" fill="#313335"/></svg>
<svg class="abs" style="left:1.2px;top:358.86px" width="6.4" height="6.4" viewBox="-3.2 -3.2 6.4 6.4"><g fill="#b8bcbf"><rect x="-0.65" y="-3.2" width="1.3" height="6.4" transform="rotate(0)"/><rect x="-0.65" y="-3.2" width="1.3" height="6.4" transform="rotate(45)"/><rect x="-0.65" y="-3.2" width="1.3" height="6.4" transform="rotate(90)"/><rect x="-0.65" y="-3.2" width="1.3" height="6.4" transform="rotate(135)"/><circle r="2.2"/></g><circle r="1" fill="#313335"/></svg>
<svg class="abs" style="left:1.2px;top:391.32000000000005px" width="6.4" height="6.4" viewBox="-3.2 -3.2 6.4 6.4"><g fill="#b8bcbf"><rect x="-0.65" y="-3.2" width="1.3" height="6.4" transform="rotate(0)"/><rect x="-0.65" y="-3.2" width="1.3" height="6.4" transform="rotate(45)"/><rect x="-0.65" y="-3.2" width="1.3" height="6.4" transform="rotate(90)"/><rect x="-0.65" y="-3.2" width="1.3" height="6.4" transform="rotate(135)"/><circle r="2.2"/></g><circle r="1" fill="#313335"/></svg>
<svg class="abs" style="left:635.3px;top:321.3px" width="6.4" height="6" viewBox="0 0 6.4 6"><path d="M3.2 0.3L6.2 5.7H0.2z" fill="#c9a93a"/><rect x="2.85" y="2" width="0.7" height="2" fill="#2b2b2b"/><rect x="2.85" y="4.4" width="0.7" height="0.7" fill="#2b2b2b"/></svg>
<div class="abs ui" style="left:642.6px;top:320.4px;font-size:6.4px;color:#b0b0b0">1</div>
<svg class="abs" style="left:648.8px;top:321.3px" width="6.4" height="6" viewBox="0 0 6.4 6"><path d="M3.2 0.8L5.7 5.4H0.7z" fill="none" stroke="#7d7a3a" stroke-width="0.8"/><rect x="2.85" y="2.4" width="0.7" height="1.6" fill="#7d7a3a"/></svg>
<div class="abs ui" style="left:656.2px;top:320.4px;font-size:6.4px;color:#b0b0b0">1</div>
<svg class="abs" style="left:661.8px;top:321px" width="7.4" height="6.6" viewBox="0 0 7.4 6.6"><path d="M1 3.2L2.8 5.2 6.4 0.8" fill="none" stroke="#58a84a" stroke-width="1.1"/><path d="M0.4 6L2.2 5.2 3.8 6 5.4 5.2 7 6" fill="none" stroke="#58a84a" stroke-width="0.6"/></svg>
<div class="abs ui" style="left:670px;top:320.4px;font-size:6.4px;color:#b0b0b0">1</div>
<svg class="abs" style="left:677px;top:322.5px" width="5.4" height="4" viewBox="0 0 5.4 4"><path d="M0.6 3.2L2.7 1 4.8 3.2" fill="none" stroke="#a8a8a8" stroke-width="0.9"/></svg>
<svg class="abs" style="left:687.3px;top:322.5px" width="5.4" height="4" viewBox="0 0 5.4 4"><path d="M0.6 0.8L2.7 3 4.8 0.8" fill="none" stroke="#a8a8a8" stroke-width="0.9"/></svg>
<div class="abs" style="left:691.2px;top:384px;width:3.3px;height:22.6px;background:#5a5d5f;border-radius:1px"></div>
<div class="abs" style="left:689.5px;top:406px;width:5.7px;height:1.3px;background:#a89a4a;"></div>
</body></html>
